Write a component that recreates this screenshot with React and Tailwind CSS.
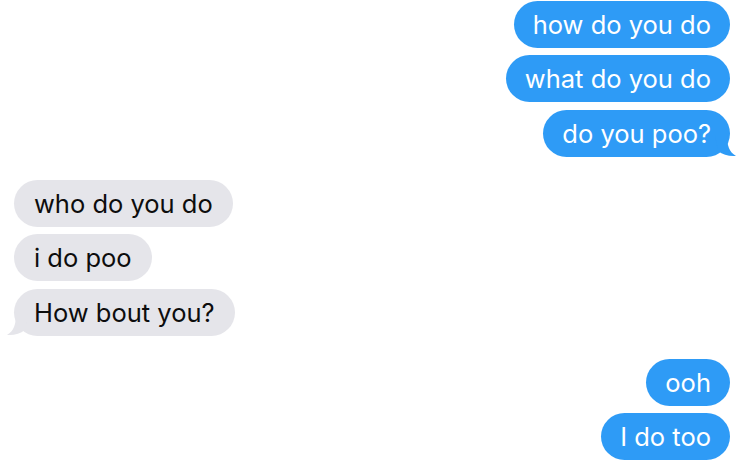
import React from 'react';

const BLUE = 'bg-[#2e9bf6]';

const TailRight = () => (
  <svg
    className="absolute right-[-7px] bottom-0"
    width="22"
    height="22"
    viewBox="0 0 22 22"
    aria-hidden="true"
  >
    <path d="M0 0 L12 0 C12 10 14 17 21 21 C14 21.5 8 20 3 16 Z" fill="#2e9bf6" />
  </svg>
);

const TailLeft = () => (
  <svg
    className="absolute left-[-8px] bottom-0"
    width="22"
    height="22"
    viewBox="0 0 22 22"
    aria-hidden="true"
  >
    <path d="M22 0 L10 0 C10 10 8 17 1 21 C8 21.5 14 20 19 16 Z" fill="#e5e5ea" />
  </svg>
);

const Sent = ({ text, mt, tail }) => (
  <div className={`flex justify-end pr-[20px] ${mt}`}>
    <div className={`relative h-[47px] rounded-full ${BLUE} px-[19px] flex items-center text-white`}>
      {tail && <TailRight />}
      <span className="relative">{text}</span>
    </div>
  </div>
);

const Received = ({ text, mt, tail }) => (
  <div className={`flex justify-start pl-[14px] ${mt}`}>
    <div className="relative h-[47px] rounded-full bg-[#e5e5ea] px-[20px] flex items-center text-[#0d0d0d]">
      {tail && <TailLeft />}
      <span className="relative">{text}</span>
    </div>
  </div>
);

export default function App() {
  return (
    <div
      className="w-[750px] h-[463px] bg-white overflow-hidden pt-[1px] text-[25.5px] leading-none"
      style={{ fontFamily: 'Inter, "Liberation Sans", sans-serif' }}
    >
      <Sent text="how do you do" mt="mt-0" />
      <Sent text="what do you do" mt="mt-[7px]" />
      <Sent text="do you poo?" mt="mt-[8px]" tail />
      <Received text="who do you do" mt="mt-[23px]" />
      <Received text="i do poo" mt="mt-[7px]" />
      <Received text="How bout you?" mt="mt-[8px]" tail />
      <Sent text="ooh" mt="mt-[23px]" />
      <Sent text="I do too" mt="mt-[7px]" />
    </div>
  );
}
